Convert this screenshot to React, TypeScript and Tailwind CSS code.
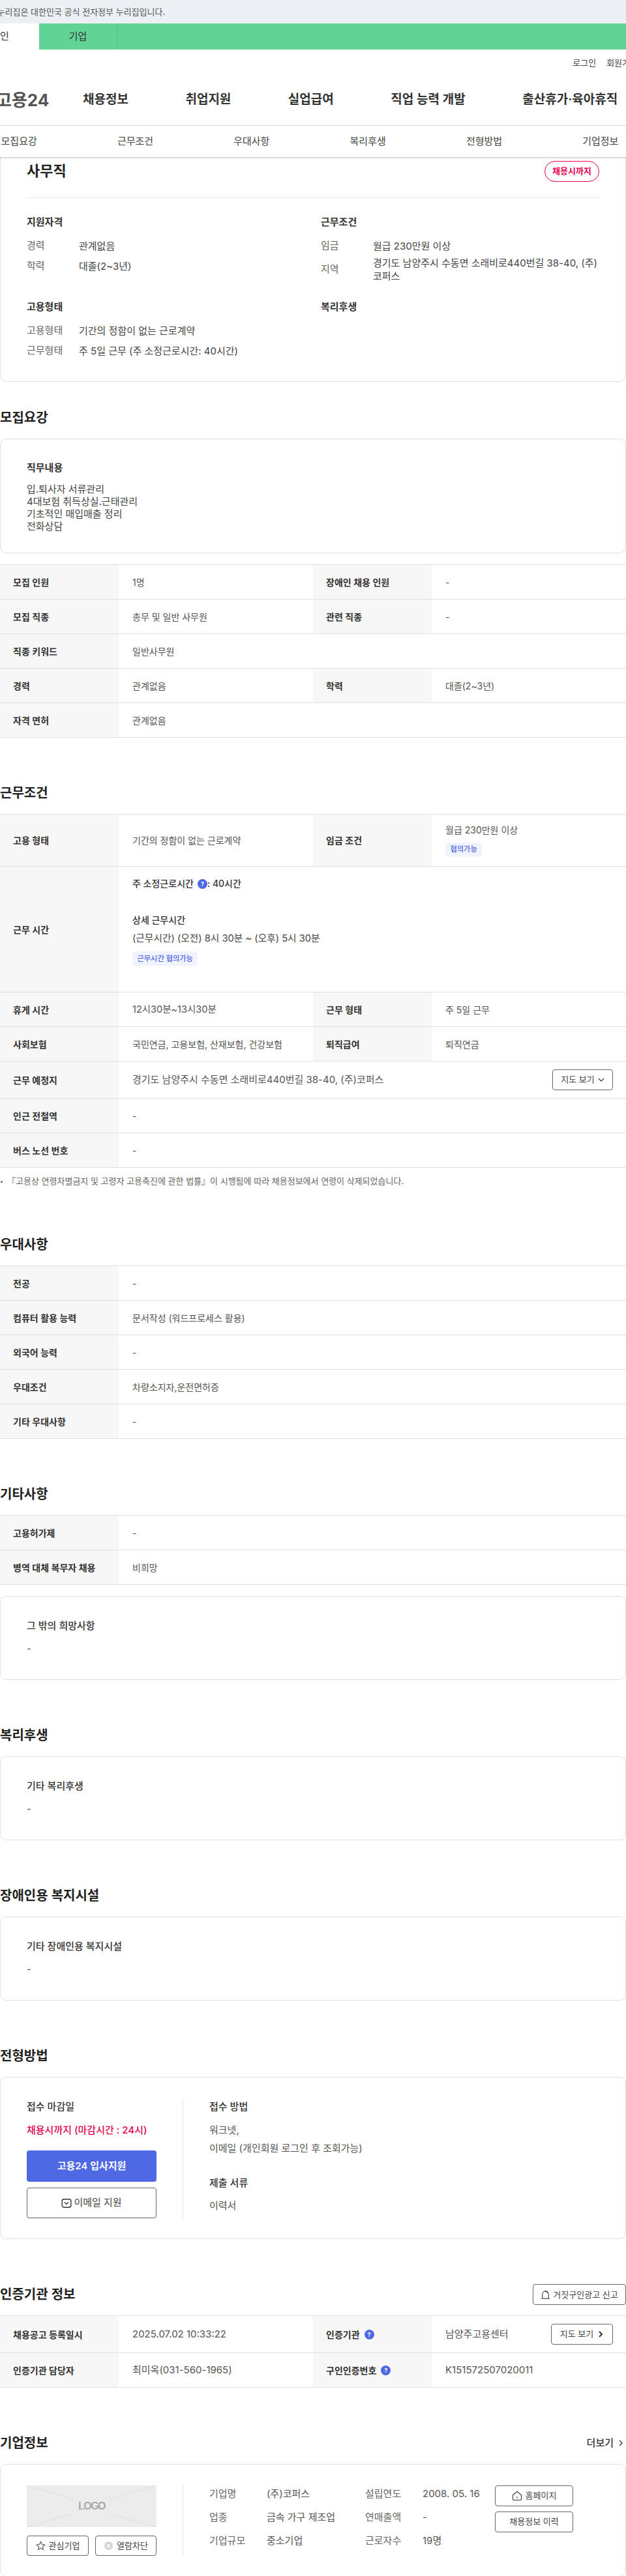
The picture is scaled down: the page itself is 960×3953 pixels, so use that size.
import React from "react";

const Q = ({ className = "" }: { className?: string }) => (
  <span className={"inline-flex h-[15px] w-[15px] shrink-0 items-center justify-center rounded-full bg-[#4f68e3] text-[9px] font-bold leading-none text-white " + className}>?</span>
);

const Title = ({ children, first }: { children: React.ReactNode; first?: boolean }) => (
  <h2 className={(first ? "mt-[41px] " : "mt-[71px] ") + "mb-[18px] h-[28px] text-[20px] font-semibold leading-[28px] text-[#222]"}>{children}</h2>
);

const Label = ({ children }: { children: React.ReactNode }) => (
  <div className="flex items-center gap-[7px] border-b border-[#e0e0e0] bg-[#f7f7f7] pl-[20px] text-[14px] font-semibold text-[#333]">{children}</div>
);

const Val = ({ children, span, cls = "" }: { children?: React.ReactNode; span?: boolean; cls?: string }) => (
  <div className={(span ? "col-span-3 " : "") + "flex items-center border-b border-[#e0e0e0] pl-[21px] text-[14px] text-[#555] " + cls}>{children}</div>
);

const Table = ({ rows, children }: { rows: string; children: React.ReactNode }) => (
  <div className={"grid grid-cols-[182px_298px_182px_298px] border-t border-[#e0e0e0] " + rows}>{children}</div>
);

const Tag = ({ children }: { children: React.ReactNode }) => (
  <span className="inline-flex h-[22px] items-center rounded-[4px] bg-[#f0f2fd] px-[7.5px] text-[11.2px] font-medium text-[#4f68e3]">{children}</span>
);

const Info = ({ k, children, cls = "h-[31px]" }: { k: string; children: React.ReactNode; cls?: string }) => (
  <div className={"flex items-center text-[15px] " + cls}>
    <span className="w-[80px] shrink-0 text-[#666]">{k}</span>
    <span className="leading-[19.5px] text-[#444]">{children}</span>
  </div>
);

const InfoHead = ({ children }: { children: React.ReactNode }) => (
  <h3 className="mb-[10px] h-[22px] text-[15px] font-semibold leading-[22px] text-[#333]">{children}</h3>
);

const DashCard = ({ title }: { title: string }) => (
  <div className="h-[129px] rounded-[10px] border border-[#e0e0e0] px-[40px] pt-[34px]">
    <div className="h-[22px] text-[15px] font-medium leading-[22px] text-[#333]">{title}</div>
    <div className="mt-[13px] h-[22px] text-[15px] leading-[22px] text-[#555]">-</div>
  </div>
);

const Chevron = ({ cls = "", sw = "1.6" }: { cls?: string; sw?: string }) => (
  <svg viewBox="0 0 10 10" className={"h-[10px] w-[10px] " + cls} fill="none" stroke="#333" strokeWidth={sw}><path d="M3 1l4 4-4 4" /></svg>
);

const OutBtn = ({ children, cls }: { children: React.ReactNode; cls: string }) => (
  <div className={"flex items-center justify-center rounded-[4px] border border-[#666] text-[#444] " + cls}>{children}</div>
);

export default function App() {
  return (
    <div className="w-[960px] overflow-hidden bg-white font-['Inter','Noto_Sans_CJK_KR',sans-serif] text-[#333]">
      {/* government banner */}
      <div className="h-[36px] whitespace-nowrap bg-[#ecf0f5] text-[13px] leading-[36px] text-[#555]">
        <span className="-ml-[20px] inline-block">이 누리집은 대한민국 공식 전자정부 누리집입니다.</span>
      </div>
      {/* user switch */}
      <div className="flex h-[40px] bg-[#61d394] text-[15px] text-[#333]">
        <div className="-ml-[60px] flex w-[120px] items-center justify-center bg-white">개인</div>
        <div className="flex w-[120px] items-center justify-center border-r border-[#58c588]">기업</div>
      </div>
      {/* utility */}
      <div className="-mr-[18px] flex h-[40px] items-center justify-end gap-[16px] pt-[1px] text-[13px] text-[#444]">
        <span>로그인</span>
        <span className="whitespace-nowrap">회원가입</span>
      </div>
      {/* main nav */}
      <div className="flex h-[77px] items-center whitespace-nowrap border-b border-[#e6e6e6] pb-[1px]">
        <div className="-ml-[6px] w-[133px] text-[26px] font-bold leading-none text-[#555]">고용24</div>
        <nav className="flex gap-[87.5px] text-[19px] font-semibold text-[#333]">
          <span>채용정보</span>
          <span>취업지원</span>
          <span>실업급여</span>
          <span>직업 능력 개발</span>
          <span>출산휴가·육아휴직</span>
        </nav>
      </div>
      {/* sticky sub nav */}
      <div className="relative z-10 -ml-[60px] grid h-[48px] w-[1070px] grid-cols-6 items-center bg-white text-center text-[15px] text-[#444] shadow-[0_1px_3px_rgba(0,0,0,0.25)]">
        <span>모집요강</span>
        <span>근무조건</span>
        <span>우대사항</span>
        <span>복리후생</span>
        <span>전형방법</span>
        <span>기업정보</span>
      </div>

      {/* summary card */}
      <section className="h-[345px] rounded-b-[10px] border border-t-0 border-[#e0e0e0] px-[40px]">
        <div className="flex h-[63px] items-start justify-between border-b border-[#e6e6e6]">
          <h1 className="mt-[6px] text-[22px] font-bold leading-[30px] text-[#222]">사무직</h1>
          <span className="mt-[6px] flex h-[32px] w-[84px] items-center justify-center rounded-full border border-[#e6004f] text-[13px] font-semibold text-[#e6004f]">채용시까지</span>
        </div>
        <div className="mt-[26px] grid grid-cols-[451px_1fr]">
          <div className="h-[130px]">
            <InfoHead>지원자격</InfoHead>
            <Info k="경력">관계없음</Info>
            <Info k="학력">대졸(2~3년)</Info>
          </div>
          <div className="h-[130px]">
            <InfoHead>근무조건</InfoHead>
            <Info k="임금">월급 230만원 이상</Info>
            <Info k="지역" cls="h-[41px]">경기도 남양주시 수동면 소래비로440번길 38-40, (주)코퍼스</Info>
          </div>
          <div>
            <InfoHead>고용형태</InfoHead>
            <Info k="고용형태">기간의 정함이 없는 근로계약</Info>
            <Info k="근무형태">주 5일 근무 (주 소정근로시간: 40시간)</Info>
          </div>
          <div>
            <InfoHead>복리후생</InfoHead>
          </div>
        </div>
      </section>

      <Title first>모집요강</Title>
      <div className="h-[176px] rounded-[10px] border border-[#e0e0e0] px-[40px] pt-[33px]">
        <div className="h-[22px] text-[15px] font-semibold leading-[22px] text-[#333]">직무내용</div>
        <div className="mt-[12px] text-[15px] leading-[19px] text-[#444]">
          <div>입.퇴사자 서류관리</div>
          <div>4대보험 취득상실.근태관리</div>
          <div>기초적인 매입매출 정리</div>
          <div>전화상담</div>
        </div>
      </div>
      <div className="mt-[17px]">
        <Table rows="auto-rows-[53px]">
          <Label>모집 인원</Label><Val>1명</Val><Label>장애인 채용 인원</Label><Val>-</Val>
          <Label>모집 직종</Label><Val>총무 및 일반 사무원</Val><Label>관련 직종</Label><Val>-</Val>
          <Label>직종 키워드</Label><Val span>일반사무원</Val>
          <Label>경력</Label><Val>관계없음</Val><Label>학력</Label><Val>대졸(2~3년)</Val>
          <Label>자격 면허</Label><Val span>관계없음</Val>
        </Table>
      </div>

      <Title>근무조건</Title>
      <Table rows="grid-rows-[80px_193px_53px_53px_57px_53px_53px]">
        <Label>고용 형태</Label>
        <Val>기간의 정함이 없는 근로계약</Val>
        <Label>임금 조건</Label>
        <Val cls="flex-col !items-start justify-center">
          <div className="leading-[20px]">월급 230만원 이상</div>
          <div className="mt-[7px]"><Tag>협의가능</Tag></div>
        </Val>

        <Label>근무 시간</Label>
        <Val span cls="flex-col !items-start justify-start pt-[16px]">
          <div className="flex h-[20px] items-center text-[14px] font-medium leading-[20px] text-[#333]">주 소정근로시간 <Q className="ml-[6px]" /><span>: 40시간</span></div>
          <div className="mt-[36px] text-[14px] font-medium leading-[20px] text-[#333]">상세 근무시간</div>
          <div className="mt-[8px] text-[14.7px] leading-[20px] text-[#444]">(근무시간) (오전) 8시 30분 ~ (오후) 5시 30분</div>
          <div className="mt-[9px]"><Tag>근무시간 협의가능</Tag></div>
        </Val>

        <Label>휴게 시간</Label><Val><span className="text-[14.5px]">12시30분~13시30분</span></Val><Label>근무 형태</Label><Val>주 5일 근무</Val>
        <Label>사회보험</Label><Val>국민연금, 고용보험, 산재보험, 건강보험</Val><Label>퇴직급여</Label><Val>퇴직연금</Val>
        <Label>근무 예정지</Label>
        <Val span cls="justify-between pr-[20px]">
          <span className="text-[15px]">경기도 남양주시 수동면 소래비로440번길 38-40, (주)코퍼스</span>
          <OutBtn cls="h-[32px] w-[93px] gap-[5px] text-[13px]">
            지도 보기
            <Chevron cls="rotate-90" sw="1.1" />
          </OutBtn>
        </Val>
        <Label>인근 전철역</Label><Val span>-</Val>
        <Label>버스 노선 번호</Label><Val span>-</Val>
      </Table>
      <div className="flex h-[42px] items-center gap-[7px] pl-[1px] text-[13px] text-[#666]">
        <span className="h-[3px] w-[3px] rounded-full bg-[#666]" />
        <span>『고용상 연령차별금지 및 고령자 고용촉진에 관한 법률』이 시행됨에 따라 채용정보에서 연령이 삭제되었습니다.</span>
      </div>

      <div className="mt-[62px] mb-[18px] h-[28px] text-[20px] font-semibold leading-[28px] text-[#222]">우대사항</div>
      <Table rows="auto-rows-[53px]">
        <Label>전공</Label><Val span>-</Val>
        <Label>컴퓨터 활용 능력</Label><Val span>문서작성 (워드프로세스 활용)</Val>
        <Label>외국어 능력</Label><Val span>-</Val>
        <Label>우대조건</Label><Val span>차량소지자,운전면허증</Val>
        <Label>기타 우대사항</Label><Val span>-</Val>
      </Table>

      <Title>기타사항</Title>
      <Table rows="auto-rows-[53px]">
        <Label>고용허가제</Label><Val span>-</Val>
        <Label>병역 대체 복무자 채용</Label><Val span>비희망</Val>
      </Table>
      <div className="mt-[17px]">
        <DashCard title="그 밖의 희망사항" />
      </div>

      <Title>복리후생</Title>
      <DashCard title="기타 복리후생" />

      <Title>장애인용 복지시설</Title>
      <DashCard title="기타 장애인용 복지시설" />

      <Title>전형방법</Title>
      <div className="flex h-[249px] rounded-[10px] border border-[#e0e0e0] px-[40px] pt-[32px]">
        <div className="h-[184px] w-[240px] shrink-0 border-r border-[#e6e6e6] pr-[40px]">
          <div className="w-[199px]">
            <div className="h-[26px] text-[15px] font-medium leading-[26px] text-[#333]">접수 마감일</div>
            <div className="mt-[10px] h-[26px] text-[15px] font-medium leading-[26px] text-[#e6004f]">채용시까지 (마감시간 : 24시)</div>
            <div className="mt-[18px] flex h-[48px] items-center justify-center rounded-[4px] bg-[#4f68e3] text-[15px] font-semibold text-white">고용24 입사지원</div>
            <OutBtn cls="mt-[9px] h-[47px] gap-[3px] text-[15px]">
              <svg viewBox="0 0 16 16" className="h-[16px] w-[16px]" fill="none" stroke="#333" strokeWidth="1.4"><rect x="1.2" y="1.7" width="13.6" height="12.6" rx="3" /><path d="M5 6.5l3 2.7 3-2.7" /></svg>
              이메일 지원
            </OutBtn>
          </div>
        </div>
        <div className="pl-[40px]">
          <div className="h-[26px] text-[15px] font-medium leading-[26px] text-[#333]">접수 방법</div>
          <div className="mt-[9px] text-[15px] leading-[28px] text-[#555]">
            <div>워크넷,</div>
            <div>이메일 (개인회원 로그인 후 조회가능)</div>
          </div>
          <div className="mt-[26px] h-[26px] text-[15px] font-medium leading-[26px] text-[#333]">제출 서류</div>
          <div className="mt-[8px] text-[15px] leading-[28px] text-[#555]">이력서</div>
        </div>
      </div>

      <div className="mt-[71px] mb-[18px] flex h-[28px] items-center justify-between text-[20px] font-semibold leading-[28px] text-[#222]">
        <span>인증기관 정보</span>
        <OutBtn cls="h-[32px] w-[143px] gap-[4px] text-[13px] font-normal">
          <svg viewBox="0 0 16 16" className="h-[15px] w-[15px]" fill="none" stroke="#333" strokeWidth="1.1"><path d="M3 14V7a5 5 0 0 1 10 0v7M1 14.2h14M8 2c2 .3 3 1.6 3.2 3.2" /></svg>
          거짓구인광고 신고
        </OutBtn>
      </div>
      <Table rows="grid-rows-[57px_53px]">
        <Label>채용공고 등록일시</Label>
        <Val cls="text-[15px]">2025.07.02 10:33:22</Val>
        <Label>인증기관 <Q /></Label>
        <Val cls="justify-between pr-[20px] text-[15px]">
          남양주고용센터
          <OutBtn cls="h-[32px] w-[95px] gap-[6px] text-[13px]">
            지도 보기
            <Chevron sw="2" />
          </OutBtn>
        </Val>
        <Label>인증기관 담당자</Label>
        <Val cls="text-[15px]">최미옥(031-560-1965)</Val>
        <Label>구인인증번호 <Q /></Label>
        <Val cls="text-[15px]">K151572507020011</Val>
      </Table>

      <div className="mt-[71px] mb-[18px] flex h-[28px] items-center justify-between text-[20px] font-semibold leading-[28px] text-[#222]">
        <span>기업정보</span>
        <span className="flex items-center gap-[6px] pr-[3px] text-[15px] font-medium text-[#333]">
          더보기
          <Chevron sw="1.3" />
        </span>
      </div>
      <div className="mb-[1px] flex h-[173px] rounded-[10px] border border-[#e0e0e0] px-[40px] pt-[32px]">
        <div className="h-[108px] w-[240px] shrink-0 border-r border-[#e6e6e6] pr-[40px]">
          <div className="relative flex h-[64px] w-[199px] items-center justify-center bg-[#ececec]">
            <svg viewBox="0 0 199 64" className="absolute inset-0 h-full w-full" stroke="#dedede" strokeWidth="1"><path d="M0 0l72 21M199 0l-72 21M0 64l72-21M199 64l-72-21" /></svg>
            <span className="relative font-['Liberation_Sans',sans-serif] text-[16px] font-bold tracking-[-1.5px] text-[#aaa]">LOGO</span>
          </div>
          <div className="mt-[13px] flex w-[199px] justify-between text-[13px]">
            <OutBtn cls="h-[31px] w-[95px] gap-[5px]">
              <svg viewBox="0 0 16 16" className="h-[15px] w-[15px]" fill="none" stroke="#444" strokeWidth="1.1"><path d="M8 1.5l2 4.4 4.7.6-3.5 3.2.9 4.8L8 12.1l-4.1 2.4.9-4.8L1.3 6.5 6 5.9z" /></svg>
              관심기업
            </OutBtn>
            <OutBtn cls="h-[31px] w-[94px] gap-[5px]">
              <svg viewBox="0 0 16 16" className="h-[15px] w-[15px]"><circle cx="8" cy="8" r="7" fill="#d5d5d5" /><path d="M5.3 5.3l5.4 5.4M10.7 5.3l-5.4 5.4" stroke="#fff" strokeWidth="1.3" /></svg>
              열람차단
            </OutBtn>
          </div>
        </div>
        <div className="grid h-[98px] w-[478px] shrink-0 grid-cols-[88px_151px_88px_1fr] grid-rows-[26px_26px_26px] gap-y-[10px] pl-[40px] text-[15px] leading-[26px] text-[#555]">
          <span className="text-[#666]">기업명</span><span>(주)코퍼스</span><span className="text-[#666]">설립연도</span><span>2008. 05. 16</span>
          <span className="text-[#666]">업종</span><span>금속 가구 제조업</span><span className="text-[#666]">연매출액</span><span>-</span>
          <span className="text-[#666]">기업규모</span><span>중소기업</span><span className="text-[#666]">근로자수</span><span>19명</span>
        </div>
        <div className="flex w-[120px] flex-col gap-[8px] text-[13px]">
          <OutBtn cls="h-[32px] gap-[5px]">
            <svg viewBox="0 0 16 16" className="h-[16px] w-[16px]" fill="none" stroke="#333" strokeWidth="1.1"><path d="M1.5 6.7L8 1.5l6.5 5.2v6.3a1.5 1.5 0 0 1-1.5 1.5H3A1.5 1.5 0 0 1 1.5 13z" /><path d="M8 9v2.5" /></svg>
            홈페이지
          </OutBtn>
          <OutBtn cls="h-[32px]">채용정보 이력</OutBtn>
        </div>
      </div>
    </div>
  );
}
